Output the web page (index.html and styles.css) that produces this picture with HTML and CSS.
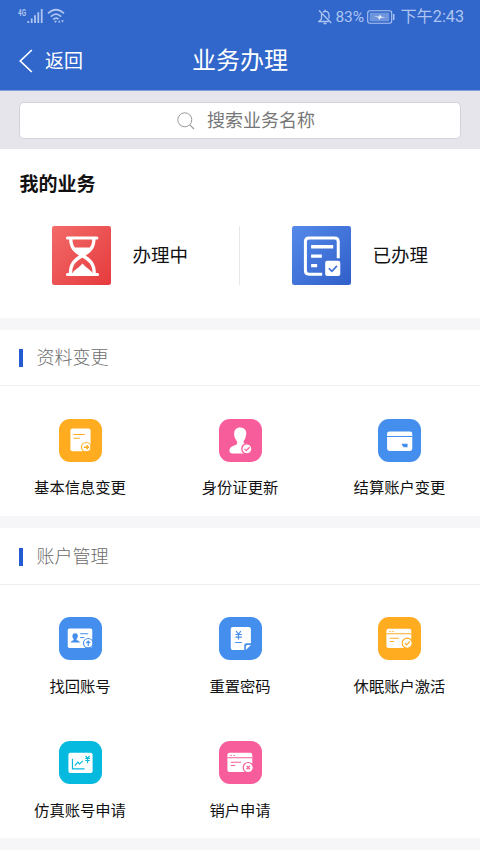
FILE: index.html
```html
<!DOCTYPE html>
<html lang="zh-CN">
<head>
<meta charset="utf-8">
<meta name="viewport" content="width=device-width, initial-scale=1">
<title>业务办理</title>
<link rel="stylesheet" href="styles.css">
</head>
<body>
<header class="top">
  <div class="status">
    <div class="status-left">
      <svg class="net" viewBox="0 0 9 12"><text x="0" y="8" textLength="8" lengthAdjust="spacingAndGlyphs" fill="currentColor">4G</text></svg>
      <svg class="signal" viewBox="0 0 16 16"><path d="M1.300 15v-2M4.700 15v-4.500M8 15V7.300M11.300 15V4.300M14.700 15V1" stroke="currentColor" stroke-width="1.800" fill="none"/></svg>
      <svg class="wifi" viewBox="0 0 18 16"><path d="M1 5.500Q9-2 17 5.500M3.800 8.600Q9 3.800 14.200 8.600M6.200 11.500Q9 9 11.500 11.200" fill="none" stroke="currentColor" stroke-width="1.700"/><path d="M7 12.800h3L8.500 15zM11 14.500l1.300-2.500 1.200 2.500zM14.200 12.200h2.600l-1.300 2.600z" fill="currentColor"/></svg>
    </div>
    <div class="status-right">
      <svg class="bell" viewBox="0 0 14 16"><path d="M1 1.500 13.300 14M3.500 5v5L1 12.500h9.500M5 3.300C7.500 1 11 2.800 11 6v3.500M7 2.300V.8M5.500 14.500h3" fill="none" stroke="currentColor" stroke-width="1.300"/></svg>
      <span class="pct">83%</span>
      <svg class="battery" viewBox="0 0 28 14"><rect x=".7" y=".7" width="24" height="12.600" rx="2.200" fill="none" stroke="currentColor" stroke-width="1.100"/><rect x="2.700" y="2.700" width="19.500" height="8.600" fill="currentColor" opacity=".5"/><path d="M7 6.200l5 .3 1-2 1.500 2.200 4 .5-5 .7-1 2-1.500-2.400z" fill="#e4edff"/><path d="M26.700 4v6" stroke="currentColor" stroke-width="1.500"/></svg>
      <span class="clock">下午2:43</span>
    </div>
  </div>
  <nav class="nav">
    <a class="back"><svg viewBox="0 0 14 24"><path d="M12.800 1 1.300 12l11.500 11" fill="none" stroke="currentColor" stroke-width="1.700"/></svg>返回</a>
    <h1>业务办理</h1>
  </nav>
</header>

<div class="search">
  <div class="search-box">
    <svg viewBox="0 0 18 18"><circle cx="7.800" cy="7.800" r="7" fill="none" stroke="currentColor"/><path d="m12.800 12.800 4.200 4.200" stroke="currentColor" stroke-width="1.200"/></svg>
    <span>搜索业务名称</span>
  </div>
</div>

<section class="mine">
  <h2>我的业务</h2>
  <div class="mine-row">
    <a class="mine-item">
      <svg class="tile" viewBox="0 0 176 176">
        <defs><linearGradient id="red" x1="0" y1="0" x2="1" y2="1"><stop offset="0" stop-color="#f26b69"/><stop offset="1" stop-color="#e63a3d"/></linearGradient></defs>
        <rect width="176" height="176" rx="7" fill="url(#red)"/>
        <path d="M46 36h88M46 145h90" stroke="#fff" stroke-width="9" stroke-linecap="round"/>
        <path d="M56 38c0 28 14 39 34 50 22 12 36 24 36 54M125 38c0 28-14 39-34 50-22 12-36 24-36 54" fill="none" stroke="#fff" stroke-width="10"/>
        <path d="M62 64h57c-5 11-16 17-28 26-12-9-24-15-29-26zM61 141c4-9 19-16 30-29 11 13 26 20 30 29z" fill="#fff"/>
      </svg>
      <span>办理中</span>
    </a>
    <a class="mine-item">
      <svg class="tile" viewBox="0 0 176 176">
        <defs><linearGradient id="blue" x1="0" y1="0" x2="1" y2="1"><stop offset="0" stop-color="#5489e9"/><stop offset="1" stop-color="#305fc9"/></linearGradient></defs>
        <rect width="176" height="176" rx="7" fill="url(#blue)"/>
        <path d="M90 144H51q-11 0-11-11V47q0-11 11-11h76q11 0 11 11v49" fill="none" stroke="#fff" stroke-width="9"/>
        <path d="M57 62h66M57 90h32M57 118h18" stroke="#fff" stroke-width="10"/>
        <rect x="99" y="104" width="45" height="45" rx="6" fill="#fff"/>
        <path d="m110 126 9 9 15-16" fill="none" stroke="#3d6fd6" stroke-width="5"/>
      </svg>
      <span>已办理</span>
    </a>
  </div>
</section>

<section class="group">
  <h3>资料变更</h3>
  <div class="grid">
    <a class="item">
      <svg class="icon amber" viewBox="0 0 128 128"><rect x="34" y="28" width="60" height="68" rx="6" fill="#fff"/><path d="M43 46h34M43 57h19" stroke="currentColor" stroke-width="3"/><circle cx="81" cy="84" r="14" fill="#fff" stroke="currentColor" stroke-width="3.500"/><path d="M74 84h13M82 78l6 6-6 6" fill="none" stroke="currentColor" stroke-width="4"/></svg>
      <span>基本信息变更</span>
    </a>
    <a class="item">
      <svg class="icon pink" viewBox="0 0 128 128"><path d="M63 25c14 0 19 9 18 20-1 9-3 15-7 20-2 4-1 7 3 9l12 5v24H40c-6 0-9-4-9-10 0-7 6-12 16-15 7-2 9-6 6-12-5-7-8-13-8-21 0-12 6-20 18-20z" fill="#fff"/><circle cx="83" cy="89" r="15" fill="#fff" stroke="currentColor" stroke-width="4"/><path d="m76 89 5 5 10-10" fill="none" stroke="currentColor" stroke-width="3.500"/></svg>
      <span>身份证更新</span>
    </a>
    <a class="item">
      <svg class="icon azure" viewBox="0 0 128 128"><rect x="27" y="37" width="75" height="58" rx="7" fill="#fff"/><path d="M27 52h75" stroke="currentColor" stroke-width="3"/><path d="M71 74h17v10H76q-2-6-5-6z" fill="currentColor"/></svg>
      <span>结算账户变更</span>
    </a>
  </div>
</section>

<section class="group accounts">
  <h3>账户管理</h3>
  <div class="grid">
    <a class="item">
      <svg class="icon azure" viewBox="0 0 128 128"><rect x="26" y="34" width="73" height="58" rx="5" fill="#fff"/><path d="M48 48c7 0 9 5 8 10-1 4-3 6-4 9 1 4 10 3 10 9H35c0-6 9-5 9-9-1-3-4-5-4-9-1-5 2-10 8-10z" fill="currentColor"/><path d="M63 50h24M63 61h12" stroke="currentColor" stroke-width="3"/><circle cx="87" cy="78" r="14" fill="#fff" stroke="currentColor" stroke-width="3.500"/><path d="M87 86V73M81 78l6-6 6 6" fill="none" stroke="currentColor" stroke-width="3.500"/></svg>
      <span>找回账号</span>
    </a>
    <a class="item">
      <svg class="icon azure" viewBox="0 0 128 128"><path d="M41 30h48q6 0 6 6v42H82q-7 0-7 7v13H41q-6 0-6-6V36q0-6 6-6z" fill="#fff"/><path d="M80 98V88q0-5 5-5h10z" fill="#fff"/><path d="m51 42 7 9 7-9M49 52h19M49 60h19M58 51v16M48 76h20" fill="none" stroke="currentColor" stroke-width="3.500"/></svg>
      <span>重置密码</span>
    </a>
    <a class="item">
      <svg class="icon amber" viewBox="0 0 128 128"><rect x="25" y="35" width="74" height="57" rx="6" fill="#fff"/><path d="M25 50h74M35 63h27M35 73h13" stroke="currentColor" stroke-width="3"/><path d="M34 43h4M43 43h4" stroke="currentColor" stroke-width="3"/><circle cx="87" cy="78" r="15" fill="#fff" stroke="currentColor" stroke-width="3.500"/><path d="m80 78 5 5 10-10" fill="none" stroke="currentColor" stroke-width="3.500"/></svg>
      <span>休眠账户激活</span>
    </a>
    <a class="item">
      <svg class="icon cyan" viewBox="0 0 128 128"><rect x="28" y="35" width="72" height="60" rx="6" fill="#fff"/><path d="M40 53v30h36M47 73l9-10 5 5 10-9" fill="none" stroke="currentColor" stroke-width="3.500"/><path d="m79 44 6 8 6-8M78 52h14M78 58h14M85 51v15" fill="none" stroke="currentColor" stroke-width="3.500"/></svg>
      <span>仿真账号申请</span>
    </a>
    <a class="item">
      <svg class="icon pink" viewBox="0 0 128 128"><rect x="25" y="35" width="74" height="57" rx="6" fill="#fff"/><path d="M25 50h74M35 63h31M35 73h13" stroke="currentColor" stroke-width="3"/><path d="M34 43h4M43 43h4" stroke="currentColor" stroke-width="3"/><circle cx="87" cy="79" r="15" fill="#fff" stroke="currentColor" stroke-width="3.500"/><path d="m82 74 10 10M92 74 82 84" stroke="currentColor" stroke-width="4"/></svg>
      <span>销户申请</span>
    </a>
  </div>
</section>
</body>
</html>
```

FILE: styles.css
```css
* { box-sizing: border-box; }
body {
  margin: 0;
  height: 853px;
  overflow: hidden;
  background: #fff;
  color: #111;
  font-family: "Noto Sans CJK SC", sans-serif;
}
h1, h2, h3 { margin: 0; }
svg { display: block; flex: none; }

.top {
  height: 91px;
  background: #3166cb;
  border-bottom: 1px solid #7f9fe0;
  color: #fff;
}
.status {
  height: 32px;
  padding: 0 16px 0 18px;
  display: flex;
  justify-content: space-between;
  color: #adc5f0;
  font-family: Roboto, "Noto Sans CJK SC", sans-serif;
}
.status-left, .status-right { display: flex; align-items: center; }
.status-left { align-items: flex-start; padding-top: 8px; }
.net { width: 9px; height: 12px; overflow: visible; font-size: 8.500px; font-weight: 700; }
.signal { width: 16px; height: 16px; margin-right: 4px; }
.wifi { width: 18px; height: 16px; }
.bell { width: 14px; height: 16px; margin-right: 3px; }
.status-right { line-height: 20px; padding-top: 1px; }
.pct { width: 32px; font-size: 15.500px; }
.battery { width: 28px; height: 14px; margin-right: 5px; }
.clock { font-size: 16.200px; white-space: nowrap; padding-top: 1px; }

.nav {
  height: 58px;
  display: grid;
  grid-template-columns: 100px 1fr 100px;
  align-items: center;
}
.back {
  display: flex;
  align-items: center;
  gap: 12px;
  padding-left: 19px;
  font-size: 19px;
  line-height: 26px;
  padding-bottom: 2px;
}
.back svg { width: 14px; height: 24px; margin-top: 1px; }
.nav h1 { text-align: center; font-size: 24px; line-height: 34px; font-weight: 400; padding-bottom: 4px; }

.search { height: 58px; padding: 11px 19px; background: #e6e5eb; }
.search-box {
  height: 37px;
  background: #fff;
  border: 1px solid #d4d3d9;
  border-radius: 5px;
  display: flex;
  align-items: center;
  justify-content: center;
  gap: 12px;
  padding-left: 12px;
  color: #777;
  font-size: 18px;
  line-height: 26px;
}
.search-box span { padding-bottom: 4px; }
.search-box svg { width: 18px; height: 18px; color: #999; }

.mine { height: 169px; padding-top: 20px; }
.mine h2 { padding-left: 19.500px; font-size: 19px; line-height: 28px; font-weight: 700; color: #111; }
.mine-row { display: flex; margin-top: 29px; }
.mine-item {
  width: 240px;
  height: 59px;
  padding-left: 52px;
  display: flex;
  align-items: center;
  gap: 21.500px;
  font-size: 18.500px;
  line-height: 27px;
}
.mine-item:first-child { border-right: 1px solid #e7e7e9; }
.tile { width: 59px; height: 59px; }
.mine-item span { padding-bottom: 2px; }

.group { border-top: 12px solid #f6f6f8; height: 198px; }
.accounts { height: 334px; border-bottom: 12px solid #f6f6f8; }
.group h3 {
  height: 56px;
  padding: 0 0 3px 19px;
  display: flex;
  align-items: center;
  gap: 13.500px;
  border-bottom: 1px solid #eee;
  color: #6c6c6c;
  font-size: 18px;
  line-height: 26px;
  font-weight: 300;
}
.group h3::before { content: ""; width: 4px; height: 18px; margin-top: 3px; background: #245bd0; }
.accounts h3 { height: 57px; padding-bottom: 2px; }
.grid { display: grid; grid-template-columns: 160px 160px 159px; grid-auto-rows: 124px; padding-top: 33px; }
.accounts .grid { padding-top: 32px; }
.item { display: flex; flex-direction: column; align-items: center; gap: 13px; font-size: 15.300px; line-height: 22px; white-space: nowrap; }
.accounts .item { gap: 14px; }
.icon { width: 43px; height: 43px; border-radius: 11px; }
.amber { background: #ffac20; color: #ffac20; }
.pink { background: #f85d9b; color: #f85d9b; }
.azure { background: #448fee; color: #448fee; }
.cyan { background: #06b9df; color: #06b9df; }
```
